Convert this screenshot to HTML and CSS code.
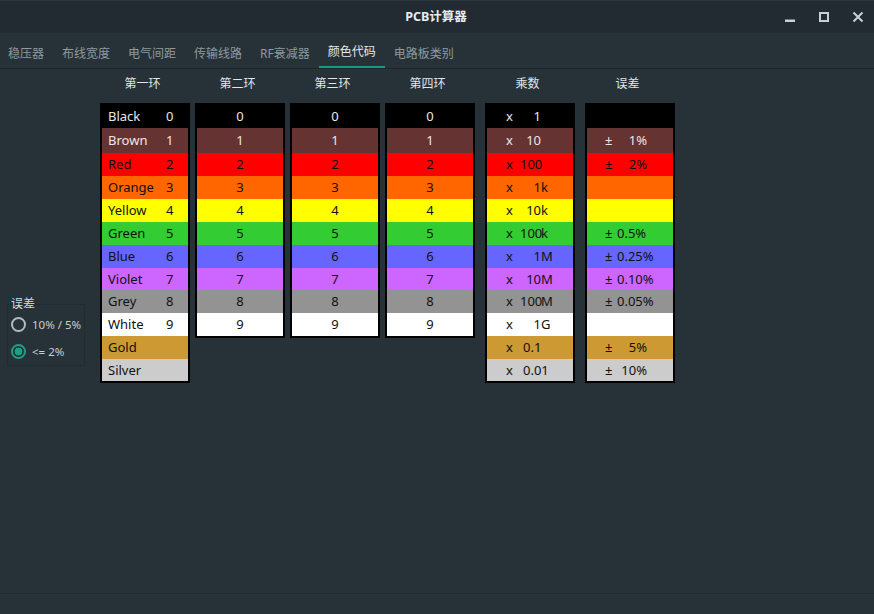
FILE: index.html
```html
<!DOCTYPE html>
<html lang="zh">
<head>
<meta charset="utf-8">
<title>PCB计算器</title>
<link rel="stylesheet" href="styles.css">
</head>
<body>
<div class="titlebar">
  <div></div>
  <div class="title">PCB计算器</div>
  <div class="controls">
    <svg width="12" height="12" viewBox="0 0 12 12"><rect x="1" y="8.5" width="10" height="2.5" fill="#c9d0d4"/></svg>
    <svg width="12" height="12" viewBox="0 0 12 12"><rect x="2" y="2" width="8" height="8" fill="none" stroke="#c9d0d4" stroke-width="2"/></svg>
    <svg width="12" height="12" viewBox="0 0 12 12"><path d="M1.5 1.5 L10.5 10.5 M10.5 1.5 L1.5 10.5" stroke="#c9d0d4" stroke-width="2"/></svg>
  </div>
</div>
<div class="tabs">
  <div class="tab">稳压器</div>
  <div class="tab">布线宽度</div>
  <div class="tab">电气间距</div>
  <div class="tab">传输线路</div>
  <div class="tab">RF衰减器</div>
  <div class="tab active">颜色代码</div>
  <div class="tab">电路板类别</div>
</div>
<div class="content">
  <div class="left">
    <div class="glabel">误差</div>
    <div class="gbox">
      <div class="radio-row"><span class="radio"></span><span>10% / 5%</span></div>
      <div class="radio-row"><span class="radio checked"></span><span>&lt;= 2%</span></div>
    </div>
  </div>
  <div class="bands">
    <div class="band">
      <div class="head">第一环</div>
      <div class="table">
        <div class="row c0"><span class="name">Black</span><span>0</span></div>
        <div class="row c1"><span class="name">Brown</span><span>1</span></div>
        <div class="row c2"><span class="name">Red</span><span>2</span></div>
        <div class="row c3"><span class="name">Orange</span><span>3</span></div>
        <div class="row c4"><span class="name">Yellow</span><span>4</span></div>
        <div class="row c5"><span class="name">Green</span><span>5</span></div>
        <div class="row c6"><span class="name">Blue</span><span>6</span></div>
        <div class="row c7"><span class="name">Violet</span><span>7</span></div>
        <div class="row c8"><span class="name">Grey</span><span>8</span></div>
        <div class="row c9"><span class="name">White</span><span>9</span></div>
        <div class="row cg"><span class="name">Gold</span></div>
        <div class="row cs"><span class="name">Silver</span></div>
      </div>
    </div>
    <div class="band">
      <div class="head">第二环</div>
      <div class="table">
        <div class="row center c0">0</div>
        <div class="row center c1">1</div>
        <div class="row center c2">2</div>
        <div class="row center c3">3</div>
        <div class="row center c4">4</div>
        <div class="row center c5">5</div>
        <div class="row center c6">6</div>
        <div class="row center c7">7</div>
        <div class="row center c8">8</div>
        <div class="row center c9">9</div>
      </div>
    </div>
    <div class="band">
      <div class="head">第三环</div>
      <div class="table">
        <div class="row center c0">0</div>
        <div class="row center c1">1</div>
        <div class="row center c2">2</div>
        <div class="row center c3">3</div>
        <div class="row center c4">4</div>
        <div class="row center c5">5</div>
        <div class="row center c6">6</div>
        <div class="row center c7">7</div>
        <div class="row center c8">8</div>
        <div class="row center c9">9</div>
      </div>
    </div>
    <div class="band">
      <div class="head">第四环</div>
      <div class="table">
        <div class="row center c0">0</div>
        <div class="row center c1">1</div>
        <div class="row center c2">2</div>
        <div class="row center c3">3</div>
        <div class="row center c4">4</div>
        <div class="row center c5">5</div>
        <div class="row center c6">6</div>
        <div class="row center c7">7</div>
        <div class="row center c8">8</div>
        <div class="row center c9">9</div>
      </div>
    </div>
    <div class="band spaced">
      <div class="head">乘数</div>
      <div class="table">
        <div class="row c0"><span class="x">x</span><span class="num">1</span></div>
        <div class="row c1"><span class="x">x</span><span class="num">10</span></div>
        <div class="row c2"><span class="x">x</span><span class="num">100</span></div>
        <div class="row c3"><span class="x">x</span><span class="num">1</span><span>k</span></div>
        <div class="row c4"><span class="x">x</span><span class="num">10</span><span>k</span></div>
        <div class="row c5"><span class="x">x</span><span class="num">100</span><span>k</span></div>
        <div class="row c6"><span class="x">x</span><span class="num">1</span><span>M</span></div>
        <div class="row c7"><span class="x">x</span><span class="num">10</span><span>M</span></div>
        <div class="row c8"><span class="x">x</span><span class="num">100</span><span>M</span></div>
        <div class="row c9"><span class="x">x</span><span class="num">1</span><span>G</span></div>
        <div class="row cg"><span class="x">x</span><span class="num dec">0.1</span></div>
        <div class="row cs"><span class="x">x</span><span class="num dec">0.01</span></div>
      </div>
    </div>
    <div class="band spaced">
      <div class="head">误差</div>
      <div class="table">
        <div class="row c0"></div>
        <div class="row c1"><span class="pm">±</span><span class="val">1%</span></div>
        <div class="row c2"><span class="pm">±</span><span class="val">2%</span></div>
        <div class="row c3"></div>
        <div class="row c4"></div>
        <div class="row c5"><span class="pm">±</span><span class="val dec">0.5%</span></div>
        <div class="row c6"><span class="pm">±</span><span class="val dec">0.25%</span></div>
        <div class="row c7"><span class="pm">±</span><span class="val dec">0.10%</span></div>
        <div class="row c8"><span class="pm">±</span><span class="val dec">0.05%</span></div>
        <div class="row c9"></div>
        <div class="row cg"><span class="pm">±</span><span class="val">5%</span></div>
        <div class="row cs"><span class="pm">±</span><span class="val">10%</span></div>
      </div>
    </div>
  </div>
</div>
<div class="status"></div>
</body>
</html>
```
FILE: styles.css
```css
html, body {
  margin: 0;
  padding: 0;
}
body {
  width: 874px;
  height: 614px;
  overflow: hidden;
  background: #263238;
  font-family: "Noto Sans", "Noto Sans CJK SC", sans-serif;
}
.titlebar {
  height: 33px;
  box-sizing: border-box;
  border-top: 1px solid #2c363c;
  background: #222b31;
  display: grid;
  grid-template-columns: 1fr auto 1fr;
  align-items: center;
}
.title {
  font-size: 12.5px;
  font-weight: bold;
  color: #e8ecee;
  line-height: 16px;
  margin-left: -2px;
}
.controls {
  justify-self: end;
  display: flex;
  gap: 22px;
  margin-right: 10px;
}
.controls svg {
  display: block;
}
.tabs {
  height: 35px;
  display: flex;
  border-bottom: 1px solid #1e272c;
  background: #263238;
}
.tab {
  height: 35px;
  box-sizing: border-box;
  padding: 14px 9px 0;
  font-size: 12px;
  line-height: 14px;
  color: #8f999e;
  white-space: nowrap;
}
.tab:first-child {
  padding-left: 8px;
}
.tab.active {
  padding-top: 12px;
  color: #e6eaec;
  border-bottom: 2px solid #1a9b80;
}
.content {
  height: 524px;
  display: flex;
  border-bottom: 1px solid #20292e;
}
.left {
  align-self: center;
  width: 78px;
  margin-left: 7px;
  margin-right: 15px;
}
.glabel {
  font-size: 12px;
  line-height: 14px;
  color: #d6dadc;
  margin-left: 4px;
  position: relative;
}
.gbox {
  margin-top: -7px;
  height: 62px;
  box-sizing: border-box;
  border: 1px solid #222b30;
  padding: 6px 0 0 3px;
}
.radio-row {
  display: flex;
  align-items: center;
  gap: 6px;
  height: 27px;
  font-size: 11.5px;
  color: #c9cfd2;
  white-space: pre;
}
.radio {
  width: 15px;
  height: 15px;
  box-sizing: border-box;
  border-radius: 50%;
  border: 2px solid #b3babe;
}
.radio.checked {
  border-color: #1e9e83;
  background: radial-gradient(circle, #1e9e83 0 3.6px, transparent 4.2px);
}
.bands {
  display: flex;
  gap: 5px;
  padding-top: 7px;
  align-self: flex-start;
}
.band {
  width: 90px;
  display: flex;
  flex-direction: column;
}
.band.spaced {
  margin-left: 5px;
}
.head {
  height: 16px;
  line-height: 16px;
  text-align: center;
  font-size: 12px;
  color: #e2e6e8;
  margin-bottom: 11px;
  padding-right: 5px;
}
.table {
  border: 2px solid #000;
  background: #000;
}
.row {
  height: 23px;
  box-sizing: border-box;
  padding-bottom: 1px;
  display: flex;
  align-items: center;
  font-size: 13px;
  color: #111;
  white-space: pre;
}
.row.center {
  justify-content: center;
}
.row.c1 { height: 25px; }
.row.c7, .row.cs { height: 22px; }
.name {
  width: 58px;
  padding-left: 6px;
}
.x {
  width: 14px;
  padding-left: 19px;
}
.num {
  width: 21px;
  text-align: right;
}
.num.dec {
  width: auto;
  padding-left: 3px;
  text-align: left;
}
.pm {
  width: 12px;
  padding-left: 18px;
}
.val {
  width: 30px;
  text-align: right;
}
.val.dec {
  width: auto;
  text-align: left;
}
.c0 { background: #000000; color: #e8e8e8; }
.c1 { background: #663333; color: #e8e8e8; }
.c2 { background: #ff0000; }
.c3 { background: #ff6600; }
.c4 { background: #ffff00; }
.c5 { background: #33cc33; }
.c6 { background: #6666ff; }
.c7 { background: #cc66ff; }
.c8 { background: #939393; }
.c9 { background: #ffffff; }
.cg { background: #cc9933; }
.cs { background: #cccccc; }
.status {
  height: 20px;
}
```
